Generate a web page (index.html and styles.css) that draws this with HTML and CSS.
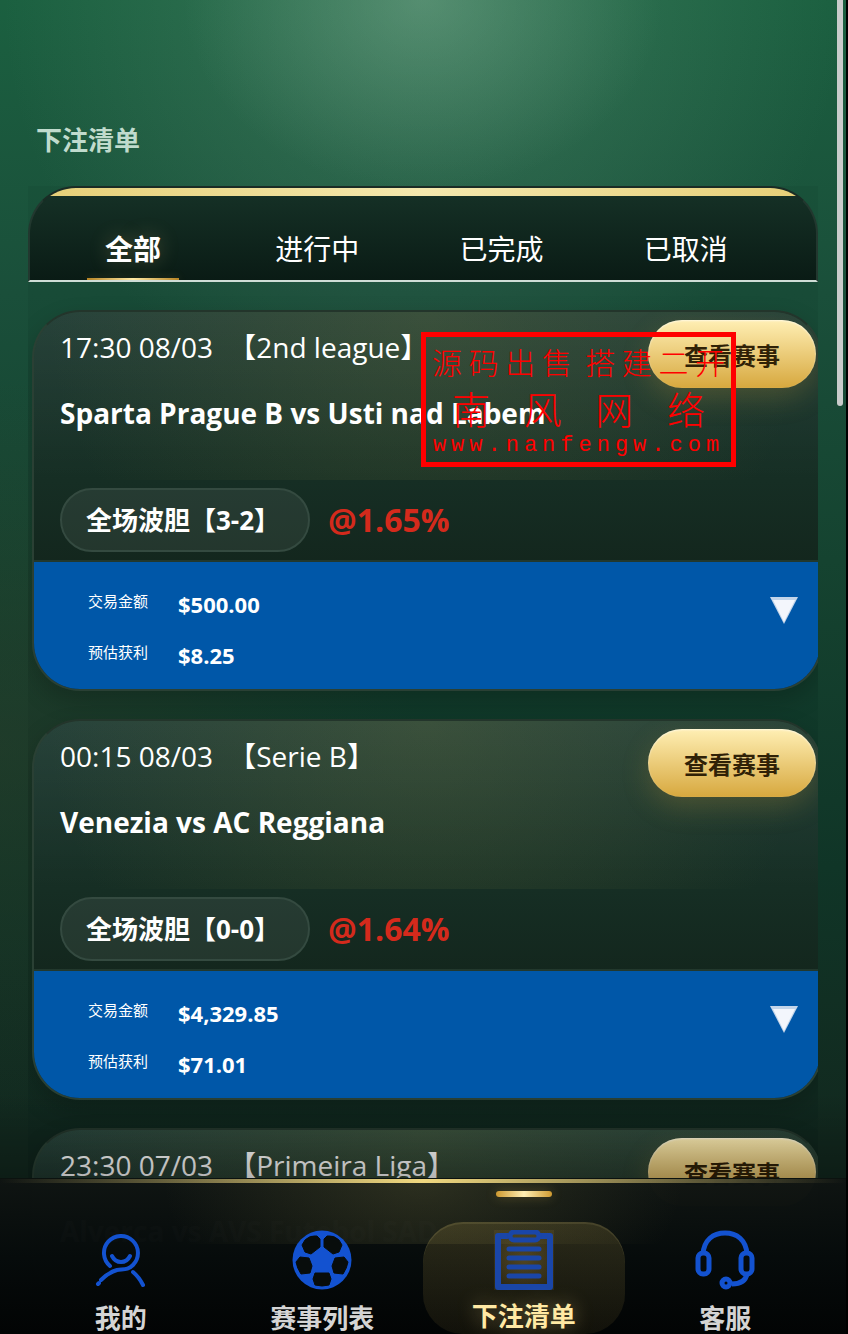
FILE: index.html
```html
<!DOCTYPE html>
<html lang="zh-CN">
  <head>
    <meta charset="UTF-8" />
    <meta name="viewport" content="width=device-width, initial-scale=1.0" />
    <title>下注清单</title>
    <link rel="stylesheet" href="styles.css">
  </head>
  <body>
    <div class="app">
      <main class="page">
        <h1 class="page-title">下注清单</h1>

        <div class="bets">
          <div class="tabs">
            <button class="tab active">全部</button>
            <button class="tab">进行中</button>
            <button class="tab">已完成</button>
            <button class="tab">已取消</button>
          </div>

          <article class="card">
            <div class="card-head">
              <div class="match">
                <p class="match-time">17:30 08/03 <span>【2nd league】</span></p>
                <h2 class="match-name">Sparta Prague B vs Usti nad Labem</h2>
              </div>
              <button class="btn-view">查看赛事</button>
            </div>
            <div class="card-odds">
              <span class="pick">全场波胆【3-2】</span>
              <span class="odds">@1.65%</span>
            </div>
            <div class="card-money">
              <dl class="amounts">
                <dt>交易金额</dt>
                <dd>$500.00</dd>
                <dt>预估获利</dt>
                <dd>$8.25</dd>
              </dl>
              <button class="btn-more" aria-label="展开">
                <svg viewBox="0 0 28 28"><path d="M0 0H28L14 27Z" fill="#c3d5ea" /><path d="M3 3H25L14 25Z" fill="#f3f6fc" /></svg>
              </button>
            </div>
          </article>

          <article class="card">
            <div class="card-head">
              <div class="match">
                <p class="match-time">00:15 08/03 <span>【Serie B】</span></p>
                <h2 class="match-name">Venezia vs AC Reggiana</h2>
              </div>
              <button class="btn-view">查看赛事</button>
            </div>
            <div class="card-odds">
              <span class="pick">全场波胆【0-0】</span>
              <span class="odds">@1.64%</span>
            </div>
            <div class="card-money">
              <dl class="amounts">
                <dt>交易金额</dt>
                <dd>$4,329.85</dd>
                <dt>预估获利</dt>
                <dd>$71.01</dd>
              </dl>
              <button class="btn-more" aria-label="展开">
                <svg viewBox="0 0 28 28"><path d="M0 0H28L14 27Z" fill="#c3d5ea" /><path d="M3 3H25L14 25Z" fill="#f3f6fc" /></svg>
              </button>
            </div>
          </article>

          <article class="card">
            <div class="card-head">
              <div class="match">
                <p class="match-time">23:30 07/03 <span>【Primeira Liga】</span></p>
                <h2 class="match-name">Alverca vs AVS Futebol SAD</h2>
              </div>
              <button class="btn-view">查看赛事</button>
            </div>
          </article>
        </div>
      </main>

      <div class="watermark">
        <p class="wm-line"><span>源</span><span>码</span><span>出</span><span>售</span><span></span><span>搭</span><span>建</span><span>二</span><span>开</span></p>
        <p class="wm-line wm-name"><span>南</span><span>风</span><span>网</span><span>络</span></p>
        <p class="wm-url">www.nanfengw.com</p>
      </div>

      <div class="fade"></div>

      <nav class="navbar">
        <a href="#" class="nav-item">
          <svg class="nav-icon" viewBox="0 0 60 60" fill="none" stroke="#1352d0" stroke-width="4" stroke-linecap="round">
            <path d="M19 36A17 17 0 1 1 42 35C37 40 33 39 26 40C19 42 14 46 10 50" />
            <path d="M21 26C25 34 35 34 39 26M42 42Q48 47 52 55M7 54L8 53" />
          </svg>
          <span>我的</span>
        </a>
        <a href="#" class="nav-item">
          <svg class="nav-icon" viewBox="0 0 60 60">
            <circle cx="30" cy="30" r="29.500" fill="#1352d0" />
            <g fill="#080d0c" stroke="#080d0c" stroke-width="1" stroke-linejoin="round">
              <path d="M10 15L13 10Q18 5 25 6L28 9V17L19 24L13 22Z" />
              <path d="M50 15L47 10Q42 5 35 6L32 9V17L41 24L47 22Z" />
              <path d="M4 32L8 27L17 28L20 36L18 43L9 44Q5 38 4 32Z" />
              <path d="M56 32L52 27L43 28L40 36L42 43L51 44Q55 38 56 32Z" />
              <path d="M23 43H37L39 49L37 55Q30 57 23 55L21 49Z" />
            </g>
          </svg>
          <span>赛事列表</span>
        </a>
        <a href="#" class="nav-item active">
          <svg class="nav-icon" viewBox="0 0 60 60" fill="none" stroke="#1a46a8">
            <path d="M14 6H4V57H56V6H46" stroke-width="6" stroke-linejoin="round" />
            <rect x="16" y="2" width="29" height="8" rx="4" stroke-width="5" />
            <path d="M15 19H45M15 28H45M15 37H45M15 46H45" stroke-width="5" stroke-linecap="round" />
          </svg>
          <span>下注清单</span>
        </a>
        <a href="#" class="nav-item">
          <svg class="nav-icon" viewBox="0 0 60 60" fill="none" stroke="#1352d0" stroke-width="5">
            <path d="M8 24C9 10 18 3 30 3C42 3 51 10 52 24M52 44Q50 54 37 54" />
            <rect x="3" y="23" width="11" height="21" rx="5" />
            <rect x="46" y="23" width="11" height="21" rx="5" />
            <circle cx="31" cy="53" r="4" />
          </svg>
          <span>客服</span>
        </a>
      </nav>

      <div class="scroll-thumb"></div>
    </div>
  </body>
</html>
```
FILE: styles.css
```css
:root {
  --gold-light: #ffefb4;
  --gold-dark: #d7a83e;
  --blue: #0057a8;
  --red: #d42a1c;
}

* {
  box-sizing: border-box;
  margin: 0;
  padding: 0;
}

body {
  font-family: "Open Sans", "Noto Sans CJK SC", sans-serif;
  color: #fff;
  background: #000;
}

button {
  font-family: inherit;
  color: inherit;
  border: none;
  background: none;
  cursor: pointer;
}

.app {
  position: relative;
  height: 100vh;
  margin-right: 2px;
  overflow: hidden;
  background:
    radial-gradient(ellipse 240px 190px at 50% 0, rgba(160, 200, 175, 0.28), rgba(160, 200, 175, 0)),
    radial-gradient(circle at 50% 0, rgba(100, 155, 125, 0.4), rgba(100, 155, 125, 0) 420px),
    radial-gradient(ellipse at 0 56%, rgba(50, 60, 40, 0.4), rgba(50, 60, 40, 0) 420px),
    linear-gradient(180deg, #1b6040 0%, #1a4f3a 22%, #154330 42%, #103527 65%, #12291f 85%);
}

.page {
  padding: 120px 28px 0;
}

.page-title {
  padding-left: 8px;
  font-size: 26px;
  line-height: 40px;
  font-weight: 700;
  color: #c0dbcd;
}

.bets {
  margin-top: 26px;
  overflow: hidden;
  background: rgba(8, 20, 14, 0.06);
}

.tabs {
  position: relative;
  display: flex;
  height: 96px;
  padding: 0 38px 0 11px;
  overflow: hidden;
  border: 2px solid #22382f;
  border-top-color: #1a2c25;
  border-bottom-color: #cfddd6;
  border-radius: 48px 48px 0 0;
  background: linear-gradient(180deg, #163227, #0a1b15);
}

.tabs::before {
  content: "";
  position: absolute;
  inset: 0 0 auto;
  height: 8px;
  background: linear-gradient(90deg, #e6cf76, #f4e8ae 50%, #e6cf76);
}

.tab {
  position: relative;
  flex: 1;
  padding-top: 28px;
  font-size: 28px;
}

.tab.active {
  font-weight: 700;
  text-shadow: 0 0 20px rgba(255, 225, 140, 0.25);
}

.tab.active::after {
  content: "";
  position: absolute;
  inset: auto 25% 0;
  height: 2px;
  background: linear-gradient(90deg, #b78525, #ffe9a4, #b78525);
  box-shadow: 0 0 8px rgba(220, 180, 80, 0.3);
}

.card {
  margin: 28px -4px 0 4px;
  overflow: hidden;
  border: 2px solid #2a4034;
  border-top-color: #23352b;
  border-radius: 48px;
  background: linear-gradient(180deg, #1a372e, #162e24 45%, #13261d 68%);
  box-shadow: 0 10px 24px rgba(0, 0, 0, 0.2);
}

.card-head {
  display: flex;
  justify-content: space-between;
  align-items: flex-start;
  height: 168px;
  padding: 8px 4px 0 26px;
  background:
    radial-gradient(ellipse 380px 340px at 50% 0, rgba(120, 125, 65, 0.24), rgba(120, 125, 65, 0)),
    linear-gradient(180deg, rgba(255, 255, 255, 0.06), rgba(255, 255, 255, 0));
}

.match-time {
  font-size: 28px;
  line-height: 54px;
}

.match-time span {
  margin-left: 8px;
}

.match-name {
  margin-top: 12px;
  font-size: 28px;
  line-height: 54px;
  font-weight: 700;
}

.btn-view {
  flex: none;
  width: 168px;
  height: 68px;
  border-radius: 34px;
  font-size: 24px;
  font-weight: 700;
  color: #302106;
  background: linear-gradient(180deg, var(--gold-light), var(--gold-dark));
  box-shadow: 0 10px 28px rgba(214, 166, 60, 0.22), inset 0 1px 2px rgba(255, 255, 255, 0.6);
}

.card-odds {
  display: flex;
  align-items: center;
  gap: 18px;
  height: 82px;
  padding: 0 26px;
  border-bottom: 2px solid #22382d;
}

.pick {
  height: 64px;
  padding: 0 28px 0 24px;
  border: 2px solid #344a40;
  border-radius: 32px;
  font-size: 26px;
  line-height: 60px;
  font-weight: 700;
  background: rgba(255, 255, 255, 0.07);
}

.odds {
  font-size: 32px;
  font-weight: 700;
  line-height: 40px;
  color: var(--red);
}

.card-money {
  display: flex;
  justify-content: space-between;
  align-items: flex-start;
  padding: 17px 22px 8px 54px;
  background: var(--blue);
}

.amounts {
  display: grid;
  grid-template-columns: 62px auto;
  column-gap: 28px;
  line-height: 51px;
}

.amounts dt {
  margin-top: -3px;
  font-size: 15px;
}

.amounts dd {
  font-size: 22px;
  font-weight: 700;
}

.btn-more {
  width: 28px;
  height: 28px;
  margin-top: 18px;
}

.btn-more svg {
  display: block;
}

.watermark {
  position: absolute;
  top: 332px;
  left: 421px;
  width: 315px;
  padding: 4px 6px;
  border: 5px solid #f00;
  color: #f00;
}

.wm-line {
  display: flex;
  justify-content: space-between;
  font-size: 30px;
  line-height: 44px;
  font-weight: 300;
}

.wm-name {
  padding: 0 20px;
  font-size: 38px;
  line-height: 48px;
}

.wm-url {
  font-family: "Liberation Mono", monospace;
  font-size: 22px;
  line-height: 25px;
  letter-spacing: 5px;
  text-align: center;
}

.fade {
  position: absolute;
  inset: auto 0 0;
  height: 240px;
  background: linear-gradient(180deg, rgba(0, 0, 0, 0), rgba(0, 0, 0, 0.3) 36%, rgba(0, 0, 0, 0.7));
}

.navbar {
  position: absolute;
  inset: auto 0 0;
  display: flex;
  height: 156px;
  padding: 43px 20px 0;
  border-top: 1px solid #0b120f;
  background: linear-gradient(180deg, rgba(15, 20, 18, 0.98), rgba(6, 11, 11, 0.98) 50%, #020404);
}

.navbar::before {
  content: "";
  position: absolute;
  inset: 0 0 auto;
  height: 65px;
  background: radial-gradient(ellipse 260px 160px at 50% 0, rgba(150, 145, 80, 0.22), rgba(150, 145, 80, 0));
}

.navbar::after {
  content: "";
  position: absolute;
  inset: 0 0 auto;
  height: 4px;
  background: linear-gradient(90deg, rgba(232, 210, 122, 0), #f0d880 50%, rgba(232, 210, 122, 0));
}

.nav-item {
  position: relative;
  flex: 1;
  display: flex;
  flex-direction: column;
  align-items: center;
  padding-top: 8px;
  font-size: 26px;
  line-height: 36px;
  font-weight: 700;
  color: #d4d4d4;
  text-decoration: none;
}

.nav-icon {
  flex: none;
  width: 60px;
  height: 60px;
  margin-bottom: 10px;
}

.nav-item.active {
  border-radius: 40px;
  color: #ffe9a4;
  background: linear-gradient(180deg, rgba(200, 170, 80, 0.18), rgba(200, 170, 80, 0.08));
  box-shadow: inset 0 2px 0 rgba(255, 235, 160, 0.1);
  text-shadow: 0 0 20px rgba(255, 225, 140, 0.4);
}

.nav-item.active .nav-icon {
  margin-bottom: 8px;
  background: radial-gradient(circle, rgba(150, 120, 50, 0.4), rgba(150, 120, 50, 0.15) 75%);
}

.nav-item.active::before {
  content: "";
  position: absolute;
  top: -31px;
  width: 56px;
  height: 6px;
  border-radius: 3px;
  background: linear-gradient(90deg, #cf9a30, var(--gold-light), #cf9a30);
  box-shadow: 0 0 12px rgba(220, 180, 80, 0.3);
}

.scroll-thumb {
  position: absolute;
  top: -4px;
  right: 3px;
  width: 6px;
  height: 410px;
  border-radius: 3px;
  background: #c9cccb;
}
```
